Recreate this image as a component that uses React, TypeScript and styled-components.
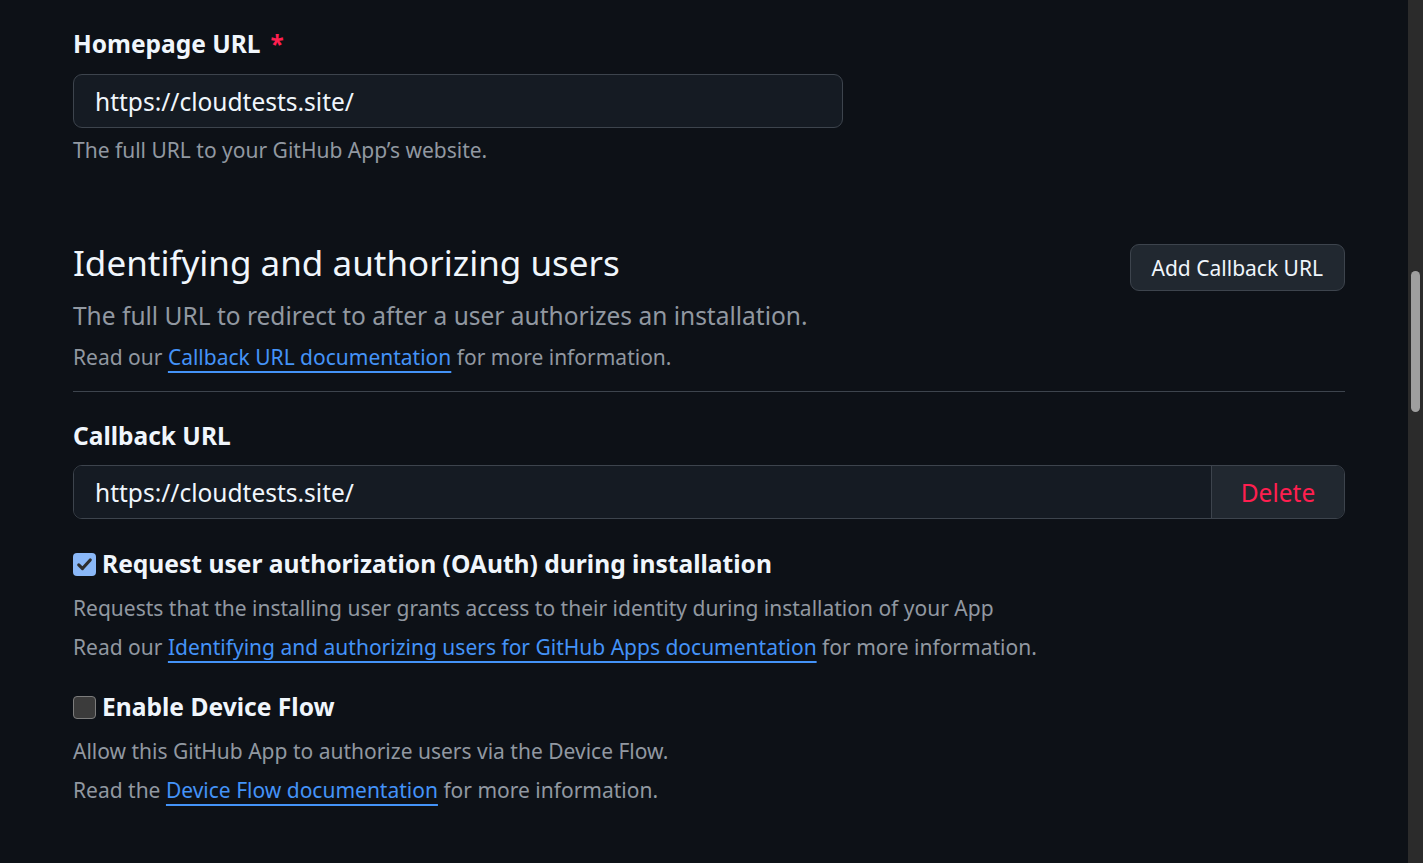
import styled, { createGlobalStyle } from "styled-components";

const GlobalStyle = createGlobalStyle`
  html, body {
    margin: 0;
    padding: 0;
    background: #0d1117;
    overflow: hidden;
  }
  body {
    font-family: "Noto Sans", "Open Sans", sans-serif;
    color: #f0f6fc;
  }
`;

const Page = styled.div`
  display: flex;
  height: 863px;
  background: #0d1117;
`;

const Main = styled.div`
  flex: 1;
  padding: 26px 63px 0 73px;
`;

const Scrollbar = styled.div`
  width: 15px;
  background: #2b2b2b;
  position: relative;
`;

const Thumb = styled.div`
  position: absolute;
  top: 271px;
  left: 3px;
  width: 9px;
  height: 141px;
  border-radius: 5px;
  background: #9f9f9f;
`;

const Field = styled.div<{ $mt?: number }>`
  display: flex;
  flex-direction: column;
  margin-top: ${(p) => p.$mt ?? 0}px;
`;

const Label = styled.label`
  font-size: 24.5px;
  font-weight: 700;
  line-height: 36px;
  color: #f0f6fc;
`;

const Required = styled.span`
  color: #ff1f4f;
  margin-left: 10px;
`;

const Input = styled.div<{ $width?: string }>`
  box-sizing: border-box;
  width: ${(p) => p.$width || "100%"};
  height: 54px;
  margin-top: 12px;
  display: flex;
  align-items: center;
  padding: 0 21px;
  font-size: 24.5px;
  color: #f0f6fc;
  background: #151b23;
  border: 1px solid #3d444d;
  border-radius: 9px;
`;

const Note = styled.p<{ $mt?: number }>`
  margin: ${(p) => p.$mt ?? 7}px 0 0;
  font-size: 21px;
  line-height: 30px;
  color: #9198a1;
`;

const Link = styled.a`
  color: #4493f8;
  text-decoration: underline;
  text-decoration-thickness: 2px;
  text-underline-offset: 6px;
`;

const SectionHead = styled.div`
  display: flex;
  justify-content: space-between;
  align-items: flex-start;
  margin-top: 76px;
  padding-bottom: 19px;
  border-bottom: 1px solid #3d444d;
`;

const HeadText = styled.div`
  display: flex;
  flex-direction: column;
`;

const Title = styled.h2`
  margin: 0;
  font-size: 35px;
  font-weight: 400;
  line-height: 44px;
  color: #f0f6fc;
`;

const Subtitle = styled.p`
  margin: 14px 0 0;
  font-size: 24.5px;
  line-height: 34px;
  color: #9198a1;
`;

const Button = styled.button`
  height: 47px;
  padding: 0 21px;
  margin-top: 3px;
  font-family: inherit;
  font-size: 21px;
  color: #f0f6fc;
  background: #212830;
  border: 1px solid #3d444d;
  border-radius: 9px;
`;

const InputGroup = styled.div`
  display: flex;
  height: 54px;
  margin-top: 11px;
  border: 1px solid #3d444d;
  border-radius: 9px;
  overflow: hidden;
  box-sizing: border-box;
`;

const GroupInput = styled.div`
  flex: 1;
  display: flex;
  align-items: center;
  padding: 0 21px;
  font-size: 24.5px;
  background: #151b23;
`;

const DeleteButton = styled.div`
  width: 132px;
  display: flex;
  align-items: center;
  justify-content: center;
  font-size: 24.5px;
  color: #ff1f4f;
  background: #212830;
  border-left: 1px solid #3d444d;
`;

const CheckRow = styled.div<{ $mt: number }>`
  display: flex;
  align-items: center;
  gap: 6px;
  margin-top: ${(p) => p.$mt}px;
`;

const Box = styled.span<{ $checked?: boolean }>`
  box-sizing: border-box;
  width: 23px;
  height: 23px;
  border-radius: 4px;
  display: flex;
  align-items: center;
  justify-content: center;
  background: ${(p) => (p.$checked ? "#8ab8f8" : "#3b3b3b")};
  border: ${(p) => (p.$checked ? "none" : "1.5px solid #7c7c7c")};
`;

const CheckLabel = styled.span`
  font-size: 24.6px;
  font-weight: 700;
  line-height: 36px;
  color: #f0f6fc;
`;

const Check = () => (
  <svg width="17" height="17" viewBox="0 0 16 16">
    <path d="M2.6 8.4 L6.1 11.8 L13.4 3.8" fill="none" stroke="#2e2e2e" strokeWidth="3" strokeLinecap="round" strokeLinejoin="round" />
  </svg>
);

export default function App() {
  return (
    <>
      <GlobalStyle />
      <Page>
        <Main>
          <Field>
            <Label>
              Homepage URL<Required>*</Required>
            </Label>
            <Input $width="770px">https://cloudtests.site/</Input>
            <Note>The full URL to your GitHub App’s website.</Note>
          </Field>

          <SectionHead>
            <HeadText>
              <Title>Identifying and authorizing users</Title>
              <Subtitle>The full URL to redirect to after a user authorizes an installation.</Subtitle>
              <Note $mt={9}>
                Read our <Link>Callback URL documentation</Link> for more information.
              </Note>
            </HeadText>
            <Button>Add Callback URL</Button>
          </SectionHead>

          <Field $mt={26}>
            <Label>Callback URL</Label>
            <InputGroup>
              <GroupInput>https://cloudtests.site/</GroupInput>
              <DeleteButton>Delete</DeleteButton>
            </InputGroup>
          </Field>

          <CheckRow $mt={27}>
            <Box $checked>
              <Check />
            </Box>
            <CheckLabel>Request user authorization (OAuth) during installation</CheckLabel>
          </CheckRow>
          <Note $mt={11}>Requests that the installing user grants access to their identity during installation of your App</Note>
          <Note $mt={9}>
            Read our <Link>Identifying and authorizing users for GitHub Apps documentation</Link> for more information.
          </Note>

          <CheckRow $mt={27}>
            <Box />
            <CheckLabel>Enable Device Flow</CheckLabel>
          </CheckRow>
          <Note $mt={11}>Allow this GitHub App to authorize users via the Device Flow.</Note>
          <Note $mt={9}>
            Read the <Link>Device Flow documentation</Link> for more information.
          </Note>
        </Main>
        <Scrollbar>
          <Thumb />
        </Scrollbar>
      </Page>
    </>
  );
}
